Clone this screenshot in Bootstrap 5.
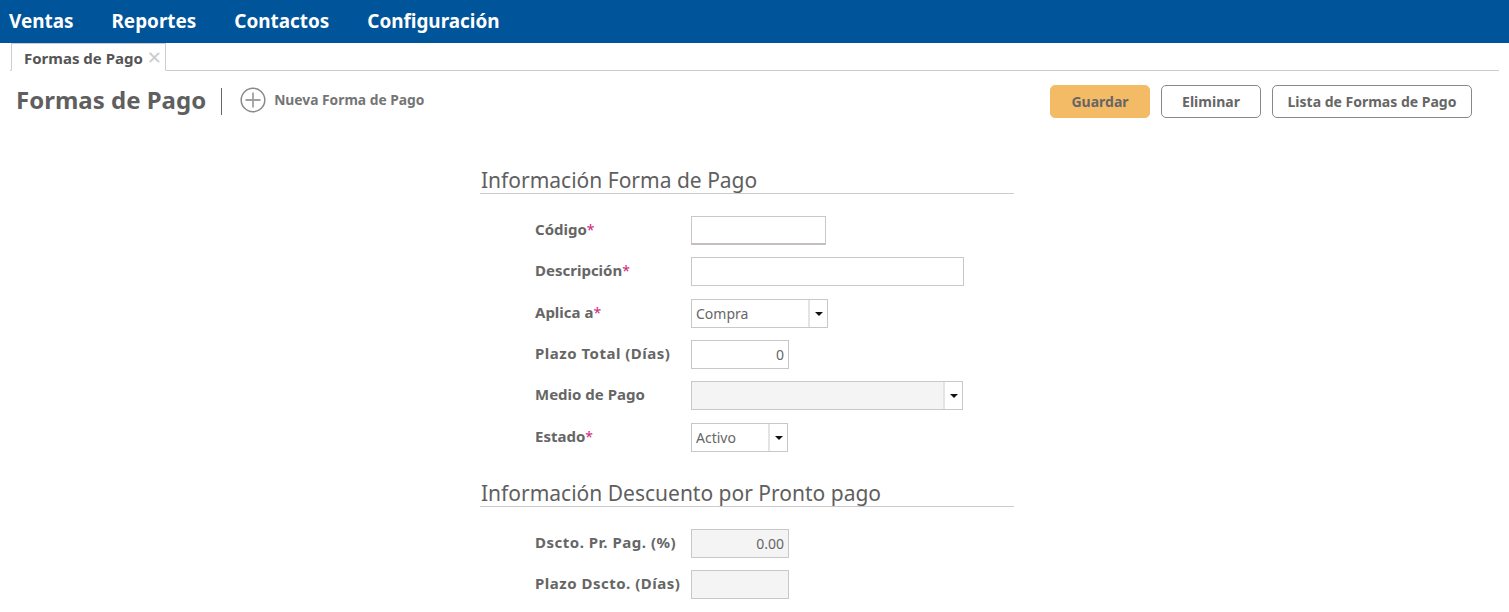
<!DOCTYPE html>
<html lang="es"><head><meta charset="utf-8"><title>Formas de Pago</title>
<link href="https://cdn.jsdelivr.net/npm/bootstrap@5.3.0/dist/css/bootstrap.min.css" rel="stylesheet">
<style>
html,body{height:612px;overflow:hidden}
body{font-family:"Noto Sans","DejaVu Sans",sans-serif;color:#666;background:#fff}
.topbar{background:#00549a;height:43px;padding-left:9px;gap:38px}
.topbar a{color:#fff;font-weight:700;font-size:18.9px;text-decoration:none;line-height:42px}
.tabstrip{height:28px;margin-left:10px;margin-right:10px;border-bottom:1px solid #ccc}
.tabitem{height:28px;width:155px;border:1px solid #ccc;border-bottom:1px solid #fff;padding:6px 0 0 12px;margin-left:1px;font-size:15px;font-weight:700;color:#555;line-height:16px;white-space:nowrap}
.tabx{color:#ccc;font-size:18px;font-weight:400;line-height:12px;margin-left:4px}
.titlebar{height:62px;padding:14px 37px 0 16px}
.pagetitle{font-size:24px;font-weight:700;color:#5f5f5f;line-height:30px;margin:0;height:34px}
.vline{width:1px;height:27px;background:#666;margin:3px 18px 0 15px}
.newlink{font-size:13.8px;font-weight:700;color:#757575;gap:8px;text-decoration:none;height:28px;margin-top:1px}
.actions{gap:11px}
.actbtn{height:33px;font-size:14px;font-weight:700;color:#666;border:1px solid #888;border-radius:5px;background:#fff;padding:0;line-height:31px}
.actbtn:hover{color:#666;border-color:#888;background:#fff}
.btnsave{width:100px;background:#f4bb66;border-color:#f4bb66}
.btnsave:hover{background:#f4bb66;border-color:#f4bb66}
.btndel{width:100px}.btnlist{width:200px}
.formwrap{width:534px;margin-left:480px;padding-top:34px}
.sectitle{font-size:21px;font-weight:400;color:#5f5f5f;line-height:26px;margin:0;height:27px;border-bottom:1px solid #ccc;padding-left:1px;white-space:nowrap}
.frow{height:29px;margin-bottom:12.3px;padding-left:55px}
.flabel{width:156px;font-size:15px;font-weight:700;color:#666;margin:0;line-height:26px;white-space:nowrap}
.widelabel{letter-spacing:.5px}
.req{color:#d0247a;font-weight:400;font-size:14px}
.fbox{height:29px;border:1px solid #c8c8c8;background:#fff;font-size:14px;color:#666;line-height:27px;padding:0 4px;border-radius:0;box-shadow:none}
.fbox:focus{outline:0;border-color:#c8c8c8;box-shadow:none}
.num{text-align:right}
.off{background:#f4f4f4}
.w135{width:135px}.w273{width:273px}.w98{width:98px}
.codebox{border-bottom:2px solid #c5bcbc}
.combo{padding:0}
.combotext{padding:0 4px;flex:1 1 auto;min-width:0}
.comboarrow{width:19px;border-left:2px solid #e4e4e4;flex:none;background:#fff}
.comboarrow::after{content:"";border-left:4px solid transparent;border-right:4px solid transparent;border-top:4px solid #111;margin-top:1px}
.w137{width:137px}.w272{width:272px}.w97{width:97px}
.sec2{margin-top:28px}
.gaptop1{padding-top:22.2px}.gaptop2{padding-top:22px}
</style></head><body>
<nav class="topbar d-flex align-items-start">
<a href="#">Ventas</a><a href="#">Reportes</a><a href="#">Contactos</a><a href="#">Configuración</a>
</nav>
<div class="tabstrip d-flex"><div class="tabitem">Formas de Pago<span class="tabx">✕</span></div></div>
<div class="titlebar d-flex align-items-start justify-content-between">
<div class="d-flex align-items-start">
<h1 class="pagetitle">Formas de Pago</h1><div class="vline"></div>
<a href="#" class="newlink d-flex align-items-center">
<svg width="26" height="26" viewBox="0 0 26 26" fill="none"><circle cx="13" cy="13" r="11.8" stroke="#8a8a8a" stroke-width="1.5"/><path d="M13 5.5v15M5.5 13h15" stroke="#a0a0a0" stroke-width="1.8"/></svg>
Nueva Forma de Pago</a></div>
<div class="d-flex actions">
<button class="btn actbtn btnsave">Guardar</button>
<button class="btn actbtn btndel">Eliminar</button>
<button class="btn actbtn btnlist">Lista de Formas de Pago</button>
</div></div>
<div class="formwrap">
<h2 class="sectitle">Información Forma de Pago</h2>
<div class="gaptop1">
<div class="frow d-flex"><label class="flabel">Código<span class="req">*</span></label><input class="fbox codebox w135" type="text"></div>
<div class="frow d-flex"><label class="flabel">Descripción<span class="req">*</span></label><input class="fbox w273" type="text"></div>
<div class="frow d-flex"><label class="flabel">Aplica a<span class="req">*</span></label><div class="fbox combo w137 d-flex"><span class="combotext">Compra</span><span class="comboarrow d-flex align-items-center justify-content-center"></span></div></div>
<div class="frow d-flex"><label class="flabel widelabel">Plazo Total (Días)</label><input class="fbox num w98" type="text" value="0"></div>
<div class="frow d-flex"><label class="flabel">Medio de Pago</label><div class="fbox combo off w272 d-flex"><span class="combotext"></span><span class="comboarrow d-flex align-items-center justify-content-center"></span></div></div>
<div class="frow d-flex"><label class="flabel">Estado<span class="req">*</span></label><div class="fbox combo w97 d-flex"><span class="combotext">Activo</span><span class="comboarrow d-flex align-items-center justify-content-center"></span></div></div>
</div>
<h2 class="sectitle sec2">Información Descuento por Pronto pago</h2>
<div class="gaptop2">
<div class="frow d-flex"><label class="flabel widelabel">Dscto. Pr. Pag. (%)</label><input class="fbox num off w98" type="text" value="0.00"></div>
<div class="frow d-flex"><label class="flabel widelabel">Plazo Dscto. (Días)</label><input class="fbox num off w98" type="text"></div>
</div></div>
</body></html>
